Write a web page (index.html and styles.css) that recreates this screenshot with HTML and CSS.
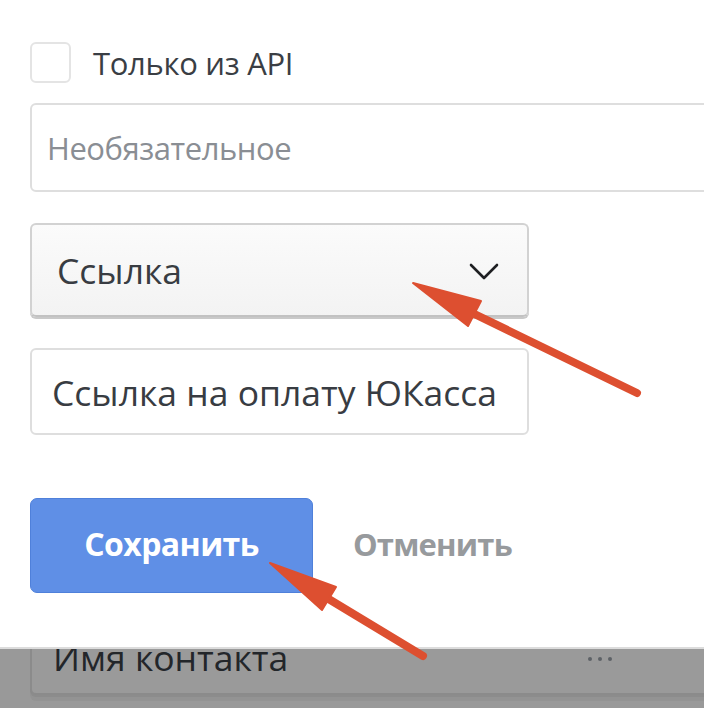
FILE: index.html
```html
<!DOCTYPE html>
<html lang="ru">
<head>
<meta charset="utf-8">
<link rel="stylesheet" href="styles.css">
</head>
<body>
<div class="page">
  <div class="form">
    <label class="check-row">
      <span class="checkbox"></span>
      <span class="check-label">Только из API</span>
    </label>
    <div class="field field-wide"><span class="placeholder">Необязательное</span></div>
    <div class="select">
      <span class="select-value">Ссылка</span>
      <svg class="chevron" width="30" height="18" viewBox="0 0 30 18"><polyline points="2,3 15,16 28,3" fill="none" stroke="#1e1f22" stroke-width="2.6" stroke-linecap="round" stroke-linejoin="round"/></svg>
    </div>
    <div class="field field-narrow"><span class="value">Ссылка на оплату ЮКасса</span></div>
    <div class="actions">
      <button class="btn-primary">Сохранить</button>
      <button class="btn-link">Отменить</button>
    </div>
  </div>
  <div class="backdrop">
    <div class="contact-field">
      <span class="contact-text">Имя контакта</span>
      <span class="dots"><i></i><i></i><i></i></span>
    </div>
  </div>
  <svg class="annotations" width="704" height="708" viewBox="0 0 704 708">
    <g fill="#dd4f30" stroke="#dd4f30" stroke-linecap="round" stroke-linejoin="round">
      <line x1="637" y1="393" x2="462" y2="308" stroke-width="8"/>
      <polygon points="413,283 481,301 468,326" stroke-width="2"/>
      <line x1="423" y1="656" x2="322" y2="595" stroke-width="8"/>
      <polygon points="270,563 336,587 322,610" stroke-width="2"/>
    </g>
  </svg>
</div>
</body>
</html>
```
FILE: styles.css
```css
* { box-sizing: border-box; }
html, body { margin: 0; padding: 0; background: #fff; }
body { font-family: "Open Sans", "Noto Sans", sans-serif; }

.page {
  position: relative;
  width: 704px;
  height: 708px;
  overflow: hidden;
  background: #fff;
  display: flex;
  flex-direction: column;
}

.form {
  display: flex;
  flex-direction: column;
  padding: 42px 0 0 30px;
  height: 647px;
}

.check-row {
  display: flex;
  align-items: center;
  gap: 22px;
  height: 41px;
}
.checkbox {
  width: 41px;
  height: 41px;
  border: 2px solid #e4e4e4;
  border-radius: 6px;
  background: #fff;
}
.check-label {
  font-size: 31px;
  color: #3a3e44;
  letter-spacing: -0.3px;
}

.field {
  display: flex;
  align-items: center;
  border: 2px solid #dedede;
  border-radius: 6px;
  background: #fff;
}
.field-wide {
  margin-top: 20px;
  height: 89px;
  width: 720px;
  padding-left: 15px;
}
.placeholder {
  font-size: 31px;
  color: #8a8e94;
  letter-spacing: -0.45px;
}
.field-narrow {
  margin-top: 31px;
  height: 87px;
  width: 499px;
  padding-left: 20px;
}
.value {
  font-size: 35.5px;
  color: #383c42;
  letter-spacing: 0;
  white-space: nowrap;
}

.select {
  margin-top: 31px;
  height: 94px;
  width: 499px;
  display: flex;
  align-items: center;
  justify-content: space-between;
  padding: 0 28px 0 25px;
  border: 2px solid #d2d2d2;
  border-bottom-color: #c2c2c2;
  border-radius: 6px;
  background: linear-gradient(#fbfbfb, #f3f3f3);
  box-shadow: 0 2px 0 #c9c9c9;
}
.select-value {
  font-size: 35.5px;
  color: #383c42;
  letter-spacing: 0;
}
.chevron { margin-top: 2px; }

.actions {
  margin-top: 63px;
  display: flex;
  align-items: center;
  gap: 40px;
}
.btn-primary {
  width: 283px;
  height: 95px;
  border: 1px solid #4f80da;
  border-radius: 7px;
  background: #5f8fe6;
  color: #fff;
  font-family: "Open Sans", "Noto Sans", sans-serif;
  font-weight: 700;
  font-size: 32px;
  letter-spacing: -0.6px;
  padding: 0 0 4px;
}
.btn-link {
  border: none;
  background: none;
  padding: 0 0 4px;
  color: #979a9d;
  font-family: "Open Sans", "Noto Sans", sans-serif;
  font-weight: 700;
  font-size: 31px;
  letter-spacing: -0.8px;
}

.backdrop {
  flex: 1;
  background: #999;
  border-top: 2px solid #dcdcdc;
  overflow: hidden;
  padding-left: 30px;
  display: flex;
  flex-direction: column;
}
.contact-field {
  margin-top: -40px;
  height: 86px;
  width: 720px;
  border: 2px solid #8b8b8b;
  border-radius: 6px;
  background: #9a9a9a;
  box-shadow: 0 2px 0 #8c8c8c, 0 6px 0 #939393;
  display: flex;
  align-items: center;
  padding: 10px 0 0 21px;
}
.contact-text {
  font-size: 35.5px;
  color: #23262a;
  letter-spacing: 0;
  width: 535px;
}
.dots { display: flex; gap: 6px; margin-top: 4px; }
.dots i {
  display: block;
  width: 4px;
  height: 4px;
  border-radius: 50%;
  background: #5d6166;
}

.annotations {
  position: absolute;
  left: 0;
  top: 0;
  pointer-events: none;
}
```
